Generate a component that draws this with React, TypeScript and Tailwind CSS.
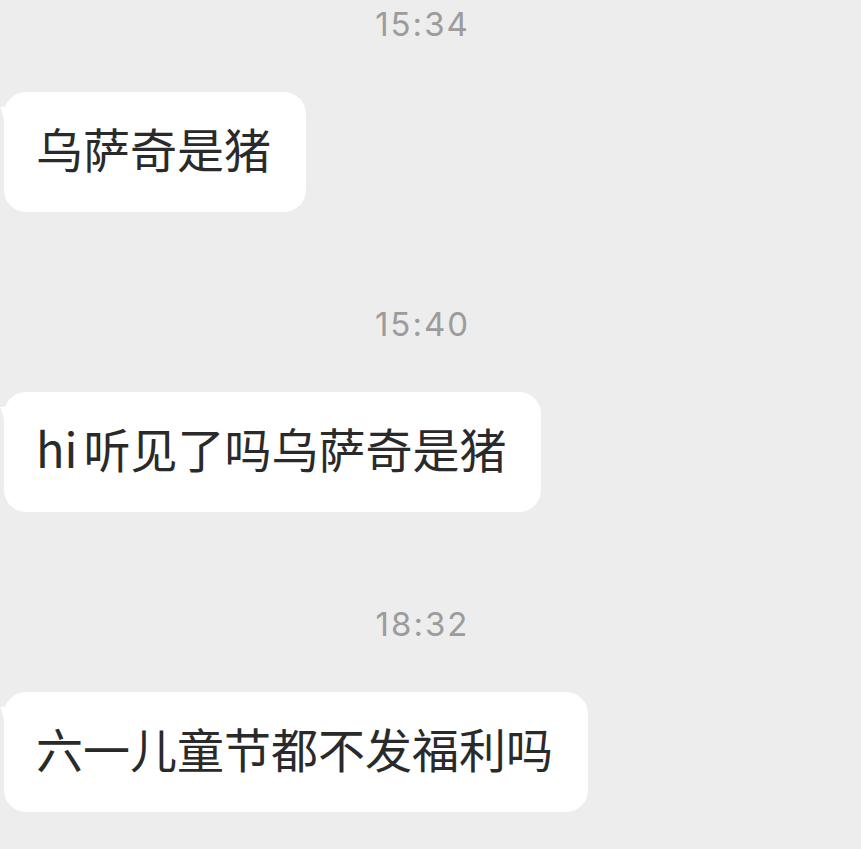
const messages = [
  { time: "15:34", lead: "", text: "乌萨奇是猪" },
  { time: "15:40", lead: "hi", text: "听见了吗乌萨奇是猪" },
  { time: "18:32", lead: "", text: "六一儿童节都不发福利吗" },
];

function Bubble({ lead, text }: { lead: string; text: string }) {
  return (
    <div className="relative ml-[4px] w-fit">
      {/* 왼쪽 꼬리 */}
      <svg
        className="absolute left-[-4px] top-[14px]"
        width="10"
        height="24"
        viewBox="0 0 10 24"
      >
        <path d="M10 0 L0 1 Q4 8 5 24 L10 24 Z" fill="#ffffff" />
      </svg>
      <div
        className="rounded-[22px] bg-white pb-[34px] pl-[32px] pr-[35px] pt-[26px] text-[47px] leading-[60px] text-[#2a2a2a]"
        style={{ fontFamily: '"Noto Sans CJK SC", "Noto Sans", sans-serif' }}
      >
        {lead && <span className="mr-[6px]">{lead}</span>}
        {text}
      </div>
    </div>
  );
}

export default function App() {
  return (
    <div className="h-[849px] w-[861px] overflow-hidden bg-[#ededed]">
      {messages.map((m) => (
        <section key={m.time} className="flex h-[300px] flex-col pt-[4px]">
          <div
            className="pr-[16px] text-center text-[33px] leading-[40px] tracking-[2px] text-[#9c9c9c]"
            style={{ fontFamily: "Inter, sans-serif" }}
          >
            {m.time}
          </div>
          <div className="mt-[48px]">
            <Bubble lead={m.lead} text={m.text} />
          </div>
        </section>
      ))}
    </div>
  );
}
